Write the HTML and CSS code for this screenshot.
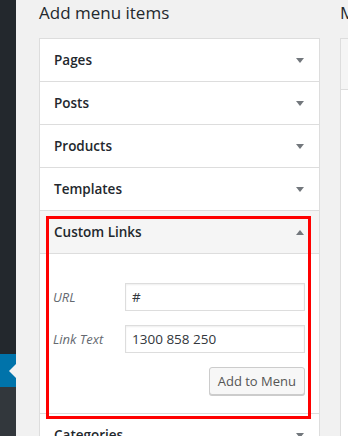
FILE: index.html
```html
<!DOCTYPE html>
<html lang="en">
<head>
    <meta charset="UTF-8">
    <meta name="viewport" content="width=device-width, initial-scale=1.0">
    <title>Menus</title>
    <link rel="stylesheet" href="styles.css">
</head>
<body>

    <div class="sidebar">
        <div class="sidebar-top"></div>
        <div class="sidebar-current"><span class="current-arrow"></span></div>
        <div class="sidebar-rest"></div>
    </div>

    <div class="main">
        <section class="col-left">
            <h2>Add menu items</h2>
            <div class="menu-box">
                <div class="item">
                    <div class="item-head">Pages <span class="arrow"></span></div>
                </div>
                <div class="item">
                    <div class="item-head">Posts <span class="arrow"></span></div>
                </div>
                <div class="item">
                    <div class="item-head">Products <span class="arrow"></span></div>
                </div>
                <div class="item">
                    <div class="item-head">Templates <span class="arrow"></span></div>
                </div>
                <div class="item open">
                    <div class="item-head">Custom Links <span class="arrow up"></span></div>
                    <div class="item-body">
                        <div class="field">
                            <label>URL</label>
                            <input type="text" value="#">
                        </div>
                        <div class="field">
                            <label>Link Text</label>
                            <input type="text" value="1300 858 250">
                        </div>
                        <div class="actions">
                            <button class="button">Add to Menu</button>
                        </div>
                    </div>
                    <div class="highlight"></div>
                </div>
                <div class="item">
                    <div class="item-head">Categories <span class="arrow"></span></div>
                </div>
            </div>
        </section>

        <section class="col-right">
            <h2>Menu structure</h2>
            <div class="structure-box">
                <div class="structure-head"></div>
                <div class="structure-body"></div>
            </div>
        </section>
    </div>

</body>
</html>
```

FILE: styles.css
```css
html, body {
    height: 100%;
}
body {
    margin: 0;
    padding: 0;
    display: flex;
    background: #f1f1f1;
    color: #23282d;
    font-family: 'Open Sans', sans-serif;
    overflow: hidden;
}

.sidebar {
    width: 16px;
    flex-shrink: 0;
    display: flex;
    flex-direction: column;
}
.sidebar-top {
    height: 354px;
    background: #23282d;
}
.sidebar-current {
    height: 33px;
    background: #0073aa;
    display: flex;
    align-items: center;
    justify-content: flex-end;
}
.current-arrow {
    width: 0;
    height: 0;
    border-top: 7px solid transparent;
    border-bottom: 7px solid transparent;
    border-right: 7px solid #f1f1f1;
}
.sidebar-rest {
    flex: 1;
    background: #32373c;
}

.main {
    display: flex;
    gap: 20px;
    padding-left: 23px;
    flex: 1;
}

h2 {
    margin: 0;
    height: 38px;
    font-size: 17px;
    font-weight: 400;
    line-height: 26px;
    color: #23282d;
}

.col-left {
    width: 281px;
    flex-shrink: 0;
}
.menu-box {
    background: #fff;
    border: 1px solid #ddd;
}
.item {
    position: relative;
    border-bottom: 1px solid #ddd;
}
.item-head {
    height: 42px;
    padding: 0 15px 0 14px;
    display: flex;
    align-items: center;
    justify-content: space-between;
    font-size: 13.5px;
    font-weight: 600;
}
.item.open .item-head {
    background: #f5f5f5;
    border-bottom: 1px solid #ddd;
}
.arrow {
    width: 0;
    height: 0;
    border-left: 4px solid transparent;
    border-right: 4px solid transparent;
    border-top: 5px solid #72777c;
}
.arrow.up {
    border-top: 0;
    border-bottom: 5px solid #72777c;
}

.item-body {
    height: 159px;
    box-sizing: border-box;
    padding: 29px 14px 0 13px;
}
.field {
    display: flex;
    align-items: center;
    margin-bottom: 14px;
}
.field label {
    width: 72px;
    font-size: 13px;
    font-style: italic;
    color: #646970;
}
.field input {
    flex: 1;
    min-width: 0;
    height: 28px;
    box-sizing: border-box;
    border: 1px solid #ddd;
    box-shadow: inset 0 1px 2px rgba(0, 0, 0, 0.07);
    padding: 0 6px;
    font-family: 'Open Sans', sans-serif;
    font-size: 13.5px;
    color: #32373c;
    outline: none;
}
.actions {
    display: flex;
    justify-content: flex-end;
}
.button {
    height: 28px;
    padding: 0 8px;
    background: #f7f7f7;
    border: 1px solid #ccc;
    border-radius: 3px;
    box-shadow: 0 1px 0 #ccc;
    color: #555;
    font-family: 'Open Sans', sans-serif;
    font-size: 13px;
}

.highlight {
    position: absolute;
    top: 5px;
    left: 6px;
    width: 265px;
    height: 203px;
    box-sizing: border-box;
    border: 3px solid #ff0000;
    pointer-events: none;
}

.col-right {
    width: 300px;
    flex-shrink: 0;
}
.structure-box {
    border: 1px solid #ddd;
    background: #fff;
}
.structure-head {
    height: 50px;
    background: #f5f5f5;
    border-bottom: 1px solid #ddd;
}
.structure-body {
    height: 400px;
}
```
